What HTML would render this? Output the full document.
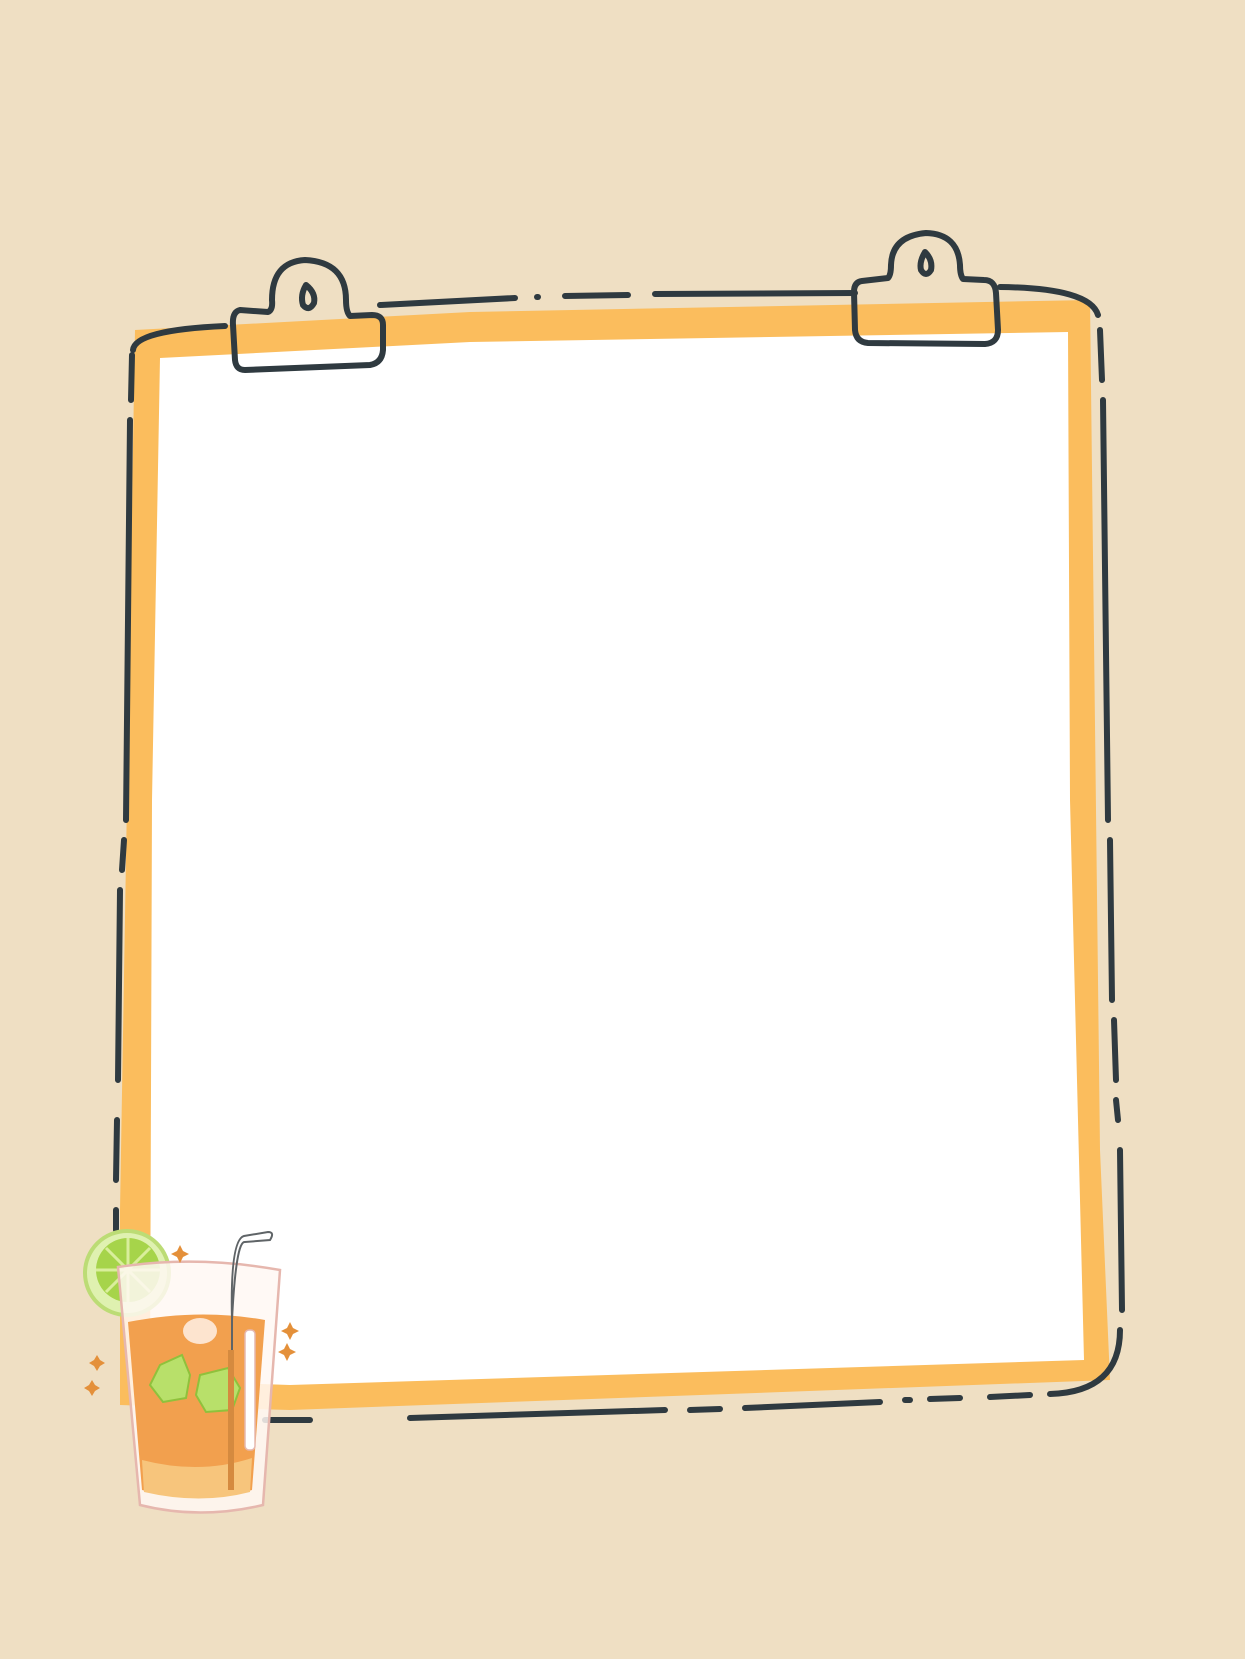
<!DOCTYPE html>
<html><head><meta charset="utf-8"><style>
html,body{margin:0;padding:0;background:#efdfc3;}
svg{display:block}
</style></head><body>
<svg width="1245" height="1659" viewBox="0 0 1245 1659" xmlns="http://www.w3.org/2000/svg">
<rect width="1245" height="1659" fill="#efdfc3"/>
<!-- orange frame -->
<path d="M135 330 L470 312 L1090 300 L1100 1150 L1110 1380 L290 1410 L120 1405 L120 1210 Z" fill="#fbbd5d"/>
<!-- white paper -->
<path d="M160 358 L470 342 L1068 332 L1070 800 L1084 1360 L290 1385 L150 1380 L152 800 Z" fill="#ffffff"/>
<!-- dark sketch lines -->
<g fill="none" stroke="#2f3a40" stroke-width="6" stroke-linecap="round">
<path d="M133 350 Q135 330 225 326"/>
<path d="M380 305 L515 298"/>
<path d="M537 297 L538 297"/>
<path d="M565 296 L628 295"/>
<path d="M655 294 L855 293"/>
<path d="M1000 287 Q1090 288 1098 315"/>
<path d="M132 355 L131 400"/>
<path d="M130 420 L126 820"/>
<path d="M124 840 L122 870"/>
<path d="M120 890 L118 1080"/>
<path d="M117 1120 L116 1180"/>
<path d="M116 1210 L116 1230"/>
<path d="M1100 330 L1102 380"/>
<path d="M1103 400 L1108 820"/>
<path d="M1110 840 L1112 1000"/>
<path d="M1114 1020 L1116 1080"/>
<path d="M1116 1100 L1118 1120"/>
<path d="M1120 1150 L1122 1310"/>
<path d="M1120 1330 Q1120 1392 1050 1394"/>
<path d="M1030 1395 L990 1397"/>
<path d="M960 1398 L930 1399"/>
<path d="M910 1400 L905 1400"/>
<path d="M880 1402 L745 1408"/>
<path d="M720 1409 L690 1410"/>
<path d="M665 1410 L410 1418"/>
<path d="M310 1420 L265 1420"/>
</g>
<!-- clips -->
<g fill="none" stroke="#2f3a40" stroke-width="6" stroke-linejoin="round">
<path d="M240 310 Q232 312 233 325 L235 360 Q236 370 245 370 L370 365 Q382 363 383 350 L383 325 Q383 315 372 315 L350 316 Q346 312 346 300 Q346 262 305 260 Q272 262 272 300 Q273 310 268 312 Z"/>
<path d="M306 285 Q300 295 303 305 Q309 312 314 303 Q316 293 306 285 Z"/>
<path d="M862 281 Q854 282 854 292 L855 330 Q856 342 868 343 L985 344 Q998 343 998 330 L996 293 Q995 280 984 280 L963 279 Q960 275 960 265 Q958 234 926 233 Q892 236 891 265 Q891 275 888 278 Z"/>
<path d="M925 252 Q919 262 921 270 Q926 278 931 270 Q933 260 925 252 Z"/>
</g>
<!-- drink -->
<g>
<circle cx="127" cy="1273" r="42" fill="#dff1b0" stroke="#bcdc75" stroke-width="4"/>
<circle cx="128" cy="1270" r="32" fill="#a6d44a"/>
<g stroke="#d9ee9c" stroke-width="3"><path d="M96 1270 L160 1270 M128 1238 L128 1302 M106 1248 L150 1292 M150 1248 L106 1292"/></g>
<path d="M118 1267 Q197 1255 280 1270 L263 1505 Q200 1520 140 1505 Z" fill="#fff8f3" fill-opacity="0.85" stroke="#e6b7ae" stroke-width="2.5"/>
<path d="M128 1322 Q200 1308 265 1320 L252 1490 Q200 1505 142 1490 Z" fill="#f2a04e"/>
<path d="M142 1460 Q200 1475 252 1458 L250 1492 Q200 1505 144 1492 Z" fill="#f7c57c"/>
<ellipse cx="200" cy="1331" rx="17" ry="13" fill="#fde4cf"/>
<path d="M160 1365 L182 1355 L190 1375 L186 1398 L163 1402 L150 1385 Z" fill="#b8e06a" stroke="#8fc13c" stroke-width="2"/>
<path d="M200 1375 L228 1368 L240 1388 L232 1410 L206 1412 L196 1395 Z" fill="#b8e06a" stroke="#8fc13c" stroke-width="2"/>
<path d="M232 1440 L232 1320 Q236 1240 245 1242 L270 1240 Q275 1232 268 1232 L244 1236 Q230 1240 232 1320" fill="none" stroke="#5f6467" stroke-width="2"/>
<rect x="228" y="1350" width="6" height="140" fill="#d58a3f"/>
<rect x="245" y="1330" width="10" height="120" rx="4" fill="#ffffff" stroke="#e6b7ae" stroke-width="1.5"/>
<g fill="#e4903a"><path d="M180 1245 l3 6 6 3 -6 3 -3 6 -3 -6 -6 -3 6 -3z"/><path d="M290 1322 l3 6 6 3 -6 3 -3 6 -3 -6 -6 -3 6 -3z"/><path d="M287 1343 l3 6 6 3 -6 3 -3 6 -3 -6 -6 -3 6 -3z"/><path d="M97 1355 l3 5 5 3 -5 3 -3 5 -3 -5 -5 -3 5 -3z"/><path d="M92 1380 l3 5 5 3 -5 3 -3 5 -3 -5 -5 -3 5 -3z"/></g>
</g>
</svg>
</body></html>
